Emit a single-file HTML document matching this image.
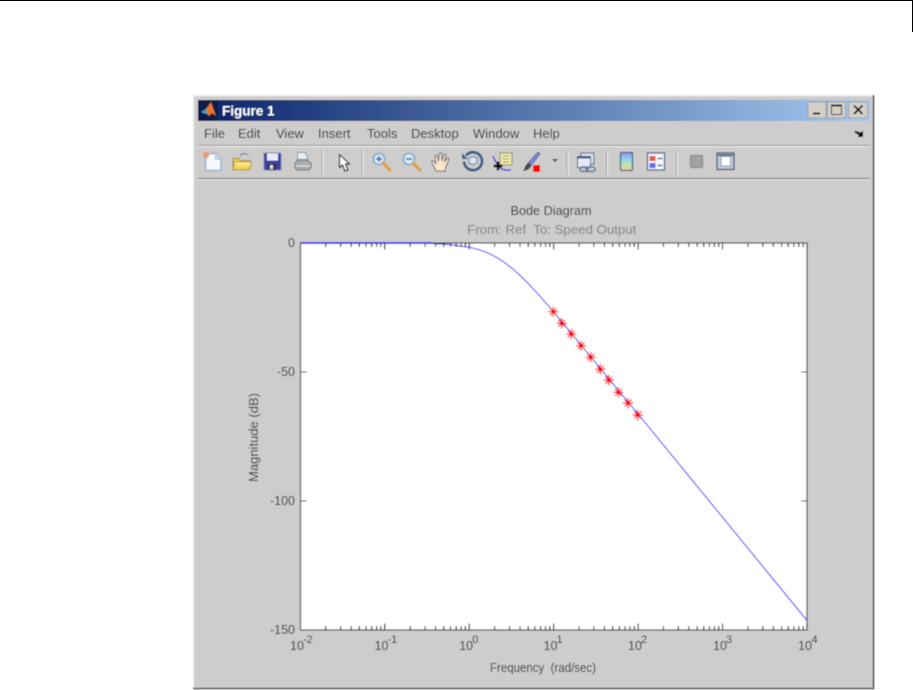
<!DOCTYPE html>
<html>
<head>
<meta charset="utf-8">
<title>Figure 1</title>
<style>
html,body{margin:0;padding:0;background:#fff;width:913px;height:690px;overflow:hidden}
svg{display:block}
text{font-family:"Liberation Sans",sans-serif}
</style>
</head>
<body>
<svg width="913" height="690" viewBox="0 0 913 690" xmlns="http://www.w3.org/2000/svg">
<defs>
<linearGradient id="tb" x1="0" x2="1" y1="0" y2="0">
<stop offset="0" stop-color="#0a246a"/><stop offset="1" stop-color="#a6caf0"/>
</linearGradient>
<linearGradient id="cb" x1="0" x2="0" y1="0" y2="1">
<stop offset="0" stop-color="#9a8fe8"/><stop offset=".35" stop-color="#8fd0ee"/><stop offset=".65" stop-color="#b8e8b0"/><stop offset="1" stop-color="#f2c48c"/>
</linearGradient>
<linearGradient id="fold" x1="0" x2="0" y1="0" y2="1">
<stop offset="0" stop-color="#fff6a0"/><stop offset="1" stop-color="#f0c238"/>
</linearGradient>
<filter id="b" x="-2%" y="-2%" width="104%" height="104%"><feGaussianBlur stdDeviation="0.4"/></filter>
<path id="dec" fill="none" stroke="#000" stroke-width="1.100" d="M25.4 0v-4M40.3 0v-4M50.8 0v-4M59 0v-4M65.7 0v-4M71.4 0v-4M76.3 0v-4M80.6 0v-4M84.45 0v-6.5"/>
<g id="mag">
<circle cx="7" cy="7" r="5.6" fill="#d8ecfa" stroke="#86aed0" stroke-width="1.800"/>
<path d="M11 11l7 7" stroke="#e0a040" stroke-width="3.200" stroke-linecap="round"/>
</g>
<g id="st" fill="none">
<path d="M-5.200 0h10.400M0-5.200v10.400M-3.400-3.400l6.800 6.800M3.400-3.400l-6.800 6.800" stroke="#ff0000" stroke-width="1.200"/>
<circle r="1.700" fill="#ff0000"/>
</g>
</defs>

<path d="M0 .5H912.5V32" fill="none" stroke="#000" stroke-width="1"/>

<g filter="url(#b)">
<rect x="193" y="95" width="681" height="594" fill="#cecdcb"/>
<path d="M193.5 689V95.5H873" fill="none" stroke="#eeeeee" stroke-width="1.4"/>
<path d="M873.5 95V688.5H193" fill="none" stroke="#555" stroke-width="1.6"/>

<!-- title bar -->
<rect x="198" y="100" width="672" height="21" fill="url(#tb)"/>
<rect x="199" y="100" width="19" height="21" fill="#0b1a48"/>
<path d="M201 112l5-3 5-7 5 14-4-3-3 3-3-3z" fill="#e8762a"/>
<path d="M201 112l5-3 2 3-3 2z" fill="#3aa0c0"/>
<text x="222" y="115.500" font-size="13.500" font-weight="bold" fill="#fff">Figure 1</text>
<g>
<rect x="808" y="102" width="18" height="16" fill="#d4d0c8" stroke="#888" stroke-width=".6"/>
<rect x="813" y="112.5" width="7" height="2" fill="#000"/>
<rect x="827.5" y="102" width="18" height="16" fill="#d4d0c8" stroke="#888" stroke-width=".6"/>
<path d="M831.5 105.5h10v9h-10z" fill="none" stroke="#000" stroke-width="1"/><path d="M831 105.5h11" stroke="#000" stroke-width="2"/>
<rect x="848.5" y="102" width="19" height="16" fill="#d4d0c8" stroke="#888" stroke-width=".6"/>
<path d="M854 105.5l8.500 8.500M862.500 105.500L854 114" stroke="#000" stroke-width="1.700"/>
</g>

<!-- menu -->
<g font-size="13" fill="#222">
<text x="204" y="138">File</text>
<text x="238" y="138">Edit</text>
<text x="276" y="138">View</text>
<text x="318" y="138">Insert</text>
<text x="367" y="138">Tools</text>
<text x="411" y="138">Desktop</text>
<text x="473" y="138">Window</text>
<text x="533" y="138">Help</text>
</g>
<path d="M855 130.500l5 2 3-1.500v6h-5.500l1.500-1.800-4.500-3z" fill="#111"/>

<path d="M198 145.500H870" stroke="#8e8e8c" stroke-width="1"/><path d="M198 146.500H870" stroke="#f2f2f2" stroke-width="1"/>
<path d="M198 178.500H870" stroke="#7c7c7a" stroke-width="1.200"/><path d="M198 179.800H870" stroke="#efefef" stroke-width="1"/>

<!-- toolbar separators -->
<g stroke="#9a9a98" stroke-width="1">
<path d="M322 150v25M362 150v25M567 150v25M606.500 150v25M676.500 150v25"/>
</g>
<g stroke="#f4f4f4" stroke-width="1">
<path d="M323 150v25M363 150v25M568 150v25M607.500 150v25M677.500 150v25"/>
</g>

<!-- new -->
<path d="M205.500 153.500h10l5.500 5.500v11.500h-15.500z" fill="#f4f8fc" stroke="#9ab4d4" stroke-width="1.600"/>
<path d="M215.500 153.500v5.500h5.500" fill="#cfe0f0" stroke="#9ab4d4"/>
<circle cx="206" cy="155" r="3.200" fill="#ec9a70"/>
<!-- open -->
<path d="M233 169.500v-11h6l1 2h10v9z" fill="#f0c850" stroke="#a88a30"/>
<path d="M233 170l1.500-8h17l-2 8z" fill="url(#fold)" stroke="#a88a30" stroke-width=".8"/>
<path d="M240 156c2-3 6-3 8-1" fill="none" stroke="#7c8ca8" stroke-width="1.400"/>
<!-- save -->
<rect x="264" y="153" width="17" height="17" rx="1" fill="#3a3ea0" stroke="#7a80c0"/>
<rect x="267" y="153.500" width="11" height="7" fill="#e8ecf8"/>
<rect x="268" y="164" width="8" height="6" fill="#30304a"/><rect x="270" y="165" width="3" height="4" fill="#ddd"/>
<!-- print -->
<path d="M297.500 152.500h8l2 7h-10z" fill="#e8f0f4" stroke="#8a9aa4"/>
<path d="M295 163l3-3h9l4 3v5l-2 2h-12l-2-2z" fill="#a8acae" stroke="#70747a"/>
<path d="M296 166h14" stroke="#ececec"/>
<!-- arrow -->
<path d="M339.500 154.500v13l3-2.500 2.500 6 3-1-2.500-6h4z" fill="#fff" stroke="#111" stroke-width="1.200" stroke-linejoin="round"/>
<!-- zoom in / out -->
<use href="#mag" x="372" y="152"/>
<path d="M376 159h6M379 156v6" stroke="#3a5a9a" stroke-width="1.400"/>
<use href="#mag" x="402" y="152"/>
<path d="M406 159h6" stroke="#3a5a9a" stroke-width="1.400"/>
<!-- hand -->
<path d="M436 171l-4-8c-.8-2 1.500-3 2.500-1l1.500 2-1-7c-.3-2 2-2.500 2.500-.500l1 5 .5-7c.2-2 2.500-2 2.600 0l.4 6.500 1.500-5.500c.5-2 2.800-1.500 2.400.5l-1.400 6 2-3c1-1.500 3-.5 2.200 1.200l-2.700 6-1 5z" fill="#fbe4cc" stroke="#6a6a70" stroke-width="1"/>
<!-- rotate -->
<path d="M466 155.500a9 9 0 1 1-2 6" fill="none" stroke="#3c5f88" stroke-width="2.800"/>
<path d="M462 153v6h6z" fill="#3c5f88"/>
<path d="M469 158l4-1.500 4 1.500v5l-4 2-4-2z" fill="#d8e4f0" stroke="#5a7aa0"/>
<!-- data cursor -->
<path d="M493 156c2 5 5 11 9 13s6 1 9 1" fill="none" stroke="#3030e0" stroke-width="1.300"/>
<rect x="500" y="153" width="12" height="12" fill="#ece8a8" stroke="#8a8a60"/>
<path d="M503 156h6M503 159h6M503 162h6" stroke="#a0a078"/>
<path d="M493.500 166h9M498 161.500v9" stroke="#000" stroke-width="2.400"/>
<!-- brush -->
<path d="M528 163l9-10c1-1.500 3.500-.5 2.500 1.500l-8 10.500z" fill="#7a8ad0" stroke="#5060a0" stroke-width=".8"/>
<path d="M528 163l3.500 2.500c-1 3-4 5-8.500 5.500 2-2 1.500-6 5-8z" fill="#4a4a4a"/>
<rect x="533" y="165" width="7" height="7" fill="#f00"/>
<path d="M552 159h6l-3 3z" fill="#444"/>
<!-- link -->
<rect x="581" y="153" width="13" height="11" fill="#d8e0ec" stroke="#3c5f88"/>
<rect x="577.500" y="156.500" width="13" height="11" fill="#e4eaf4" stroke="#3c5f88"/>
<path d="M578 157.500h12" stroke="#3c5f88" stroke-width="2"/>
<rect x="580" y="167" width="8" height="4.500" rx="2.200" fill="none" stroke="#5a7aa0" stroke-width="1.600"/>
<rect x="586" y="167" width="9" height="4.500" rx="2.200" fill="none" stroke="#5a7aa0" stroke-width="1.600"/>
<!-- colorbar -->
<rect x="620.500" y="152.500" width="12" height="18" rx="1" fill="url(#cb)" stroke="#4a6290" stroke-width="1.300"/>
<!-- legend -->
<rect x="647.500" y="153" width="17" height="17" fill="#f4f6fa" stroke="#4a6290" stroke-width="1.300"/>
<rect x="649.500" y="156" width="6" height="5" fill="#e85858"/><rect x="649.500" y="163" width="6" height="5" fill="#6868e8"/>
<path d="M657.500 158.500h5M657.500 165.500h5" stroke="#444" stroke-width="1.200"/>
<!-- hide -->
<rect x="690.500" y="155.500" width="12" height="12" rx="1" fill="#a2a2a0" stroke="#8a8a88" stroke-width="1.200"/>
<!-- plot tools -->
<rect x="717" y="153" width="17" height="16.500" fill="#c6cad2" stroke="#3f5a88" stroke-width="1.300"/>
<rect x="721" y="156.500" width="9.500" height="9.500" fill="#fff" stroke="#4f6a98" stroke-width=".6"/>
<path d="M717 155h17" stroke="#3f5a88" stroke-width="1.400"/>

<!-- axes -->
<rect x="300.500" y="243" width="506.500" height="387" fill="#fff"/>
<g transform="translate(300.300,630)">
<use href="#dec" x="0"/><use href="#dec" x="84.450"/><use href="#dec" x="168.900"/><use href="#dec" x="253.350"/><use href="#dec" x="337.800"/><use href="#dec" x="422.250"/>
</g>
<g transform="translate(300.300,243) scale(1,-1)">
<use href="#dec" x="0"/><use href="#dec" x="84.450"/><use href="#dec" x="168.900"/><use href="#dec" x="253.350"/><use href="#dec" x="337.800"/><use href="#dec" x="422.250"/>
</g>
<path d="M300.500 372h6M300.500 501h6M807 372h-6M807 501h-6" stroke="#000" stroke-width="1.100" fill="none"/>
<rect x="300.500" y="243" width="506.500" height="387" fill="none" stroke="#222" stroke-width="1.100"/>
<path d="M300.300 243H432" stroke="#0000ff" stroke-width="1.500"/>
<polyline fill="none" stroke="#1414ff" stroke-width="1" points="427,243.300 448.100,244.400 469.200,247.200 477.600,249.300 486.100,252.200 494.500,256.200 503,261.400 511.400,267.800 519.900,275.300 528.300,283.600 536.800,292.700 545.200,302.100 553.700,311.900 638.100,414.100 807,620.500"/>

<!-- markers -->
<use href="#st" x="553.300" y="311.700"/>
<use href="#st" x="561.700" y="323.300"/>
<use href="#st" x="571.300" y="334"/>
<use href="#st" x="581" y="345.700"/>
<use href="#st" x="590.700" y="357.300"/>
<use href="#st" x="600.300" y="369.300"/>
<use href="#st" x="608.700" y="380"/>
<use href="#st" x="618.300" y="392.300"/>
<use href="#st" x="628" y="403"/>
<use href="#st" x="637.700" y="415"/>

<!-- labels -->
<g fill="#2a2a2a" font-size="12.500">
<text x="551" y="215" text-anchor="middle" textLength="81" lengthAdjust="spacingAndGlyphs">Bode Diagram</text>
<text x="467.300" y="234" fill="#808080" textLength="169" lengthAdjust="spacingAndGlyphs" xml:space="preserve">From: Ref  To: Speed Output</text>
<text x="295" y="247" text-anchor="end">0</text>
<text x="295" y="376" text-anchor="end">-50</text>
<text x="295" y="505" text-anchor="end">-100</text>
<text x="295" y="634" text-anchor="end">-150</text>
<text x="290" y="650">10</text><text x="303" y="643" font-size="11">-2</text>
<text x="374.500" y="650">10</text><text x="387.500" y="643" font-size="11">-1</text>
<text x="459.200" y="650">10</text><text x="472.200" y="643" font-size="11">0</text>
<text x="543.500" y="650">10</text><text x="556.500" y="643" font-size="11">1</text>
<text x="628" y="650">10</text><text x="641" y="643" font-size="11">2</text>
<text x="713" y="650">10</text><text x="726" y="643" font-size="11">3</text>
<text x="798" y="650">10</text><text x="811.500" y="643" font-size="11">4</text>
<text x="490" y="672" textLength="106" lengthAdjust="spacingAndGlyphs" xml:space="preserve">Frequency  (rad/sec)</text>
<text transform="translate(258,482) rotate(-90)" font-size="12.500" textLength="89" lengthAdjust="spacingAndGlyphs">Magnitude (dB)</text>
</g>
</g>
</svg>
</body>
</html>
